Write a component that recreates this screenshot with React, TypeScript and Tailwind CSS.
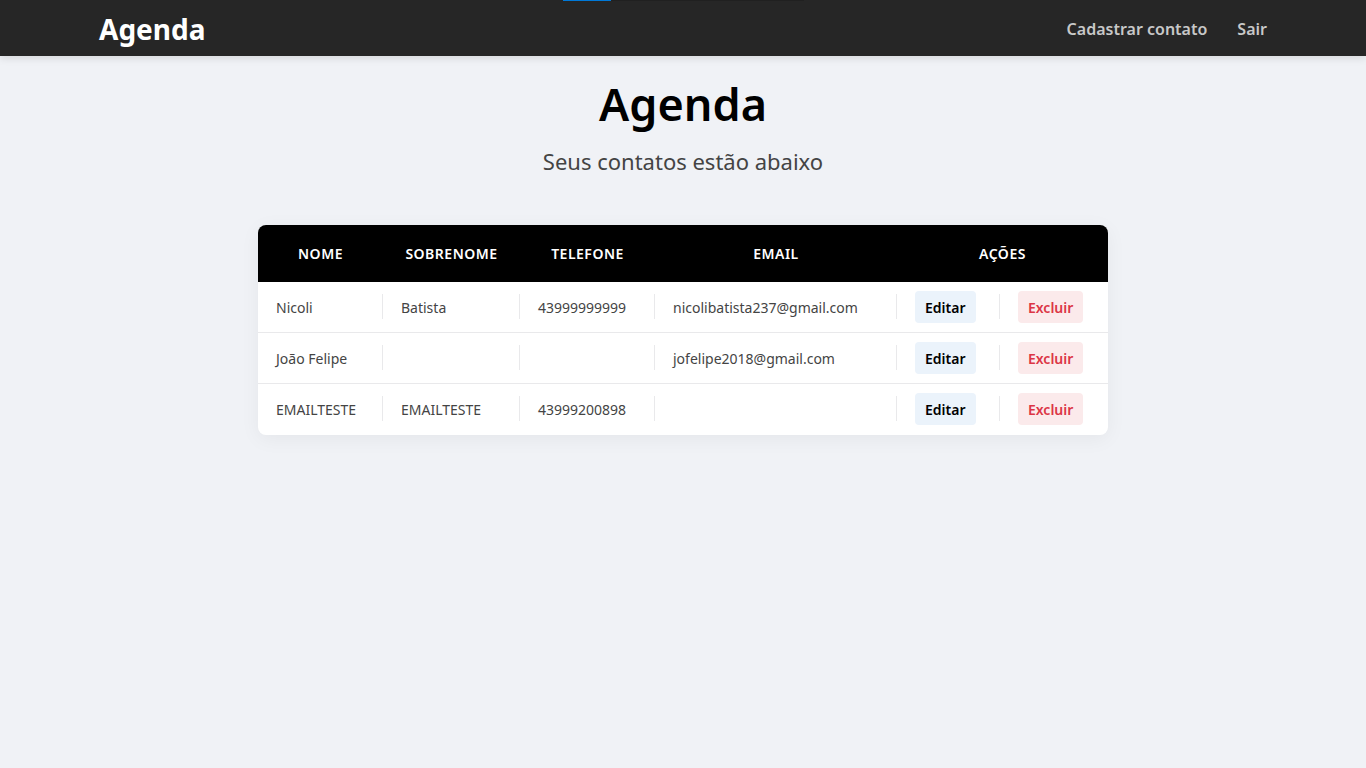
type Contact = {
  name: string;
  surname: string;
  phone: string;
  email: string;
};

const contacts: Contact[] = [
  { name: "Nicoli", surname: "Batista", phone: "43999999999", email: "nicolibatista237@gmail.com" },
  { name: "João Felipe", surname: "", phone: "", email: "jofelipe2018@gmail.com" },
  { name: "EMAILTESTE", surname: "EMAILTESTE", phone: "43999200898", email: "" },
];

const cell =
  "relative h-[51px] pl-[18px] after:absolute after:right-0 after:top-3 after:h-[25px] after:w-px after:bg-[#e9e9eb] last:after:hidden";

const action = "inline-flex h-8 items-center rounded px-[10px] pt-[2px] text-sm font-semibold";

function Navbar() {
  return (
    <header className="relative bg-[#262626] shadow-[0_2px_8px_rgba(0,0,0,0.12)]">
      <div className="absolute left-1/2 top-0 flex h-px w-[241px] -translate-x-[120px] bg-[#202020]">
        <div className="w-1/5 bg-[#0078d7]" />
      </div>
      <div className="mx-auto flex h-14 max-w-[1200px] items-center justify-between px-4">
        <a href="#" className="pt-[2px] text-[28px] font-bold leading-9 text-white">
          Agenda
        </a>
        <nav className="flex gap-[30px] pt-px text-base font-semibold leading-6 text-[#c8c8c8]">
          <a href="#cadastrar">Cadastrar contato</a>
          <a href="#sair">Sair</a>
        </nav>
      </div>
    </header>
  );
}

function ContactTable() {
  return (
    <div className="mx-auto mt-[47px] max-w-[850px] overflow-hidden rounded-lg bg-white shadow-[0_4px_20px_rgba(0,0,0,0.05)]">
      <table className="w-full table-fixed border-collapse text-left">
        <colgroup>
          <col className="w-[125px]" />
          <col className="w-[137px]" />
          <col className="w-[135px]" />
          <col className="w-[242px]" />
          <col className="w-[103px]" />
          <col className="w-[108px]" />
        </colgroup>
        <thead className="bg-black text-center text-sm uppercase tracking-[0.5px] text-white">
          <tr className="h-[57px]">
            <th scope="col" className="font-semibold">Nome</th>
            <th scope="col" className="font-semibold">Sobrenome</th>
            <th scope="col" className="font-semibold">Telefone</th>
            <th scope="col" className="font-semibold">Email</th>
            <th scope="col" colSpan={2} className="font-semibold">Ações</th>
          </tr>
        </thead>
        <tbody className="text-sm text-[#444444]">
          {contacts.map((c) => (
            <tr key={c.name} className="shadow-[inset_0_-1px_0_#e9e9eb] last:shadow-none">
              <td className={cell}>{c.name}</td>
              <td className={cell}>{c.surname}</td>
              <td className={cell}>{c.phone}</td>
              <td className={cell}>{c.email}</td>
              <td className={`${cell} pb-[2px]`}>
                <a href="#editar" className={`${action} bg-[#ebf3fb] text-black`}>Editar</a>
              </td>
              <td className={`${cell} pb-[2px]`}>
                <a href="#excluir" className={`${action} bg-[#fbeaeb] text-[#dc3545]`}>Excluir</a>
              </td>
            </tr>
          ))}
        </tbody>
      </table>
    </div>
  );
}

export default function App() {
  return (
    <div className="min-h-screen bg-[#f0f2f6] font-['Noto_Sans','Open_Sans',sans-serif]">
      <Navbar />
      <main className="px-4 pt-4 pb-12">
        <h1 className="text-center text-[45px] font-semibold leading-[64px] text-black">Agenda</h1>
        <p className="mt-[9px] text-center text-[22px] leading-[33px] text-[#444444]">Seus contatos estão abaixo</p>
        <ContactTable />
      </main>
    </div>
  );
}
